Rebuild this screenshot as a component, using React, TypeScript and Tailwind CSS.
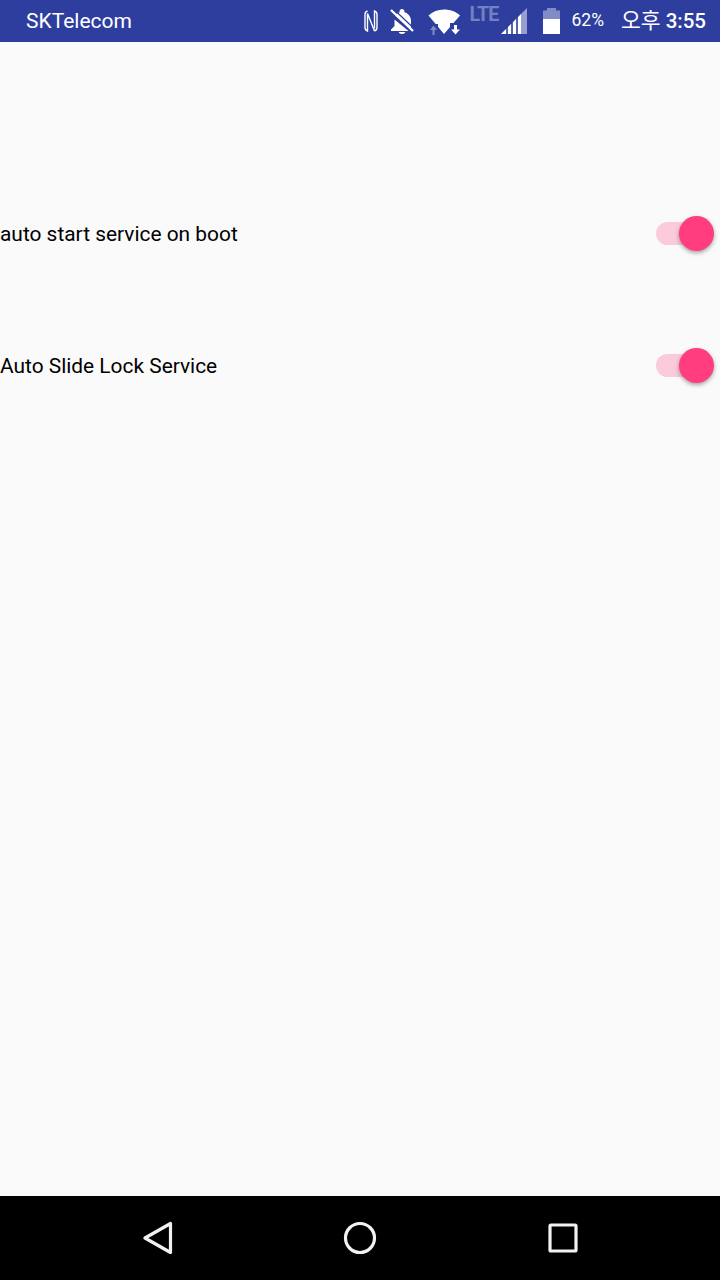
function NfcIcon() {
  return (
    <svg width="14" height="26" viewBox="0 0 14 26" fill="none" stroke="#fff" strokeWidth="1.400" className="shrink-0">
      <path d="M3.500 3C2 3.500 1 4.500 1 6.500v13c0 2 1 3 2.500 3.500V5.500L10.500 23" />
      <path d="M10.500 23c1.500-.5 2.500-1.500 2.500-3.500v-13c0-2-1-3-2.500-3.500v17.500" />
    </svg>
  );
}

function BellOffIcon() {
  return (
    <svg width="24" height="26" viewBox="0 0 24 26" className="shrink-0">
      <path fill="#fff" d="M12 1c-1.400 0-2.400 1-2.400 2.200v1.100C7.600 5 6.200 6.300 5.500 8L21 21v-8c0-4-2.500-7.700-6.600-8.700V3.200C14.400 2 13.400 1 12 1zM4.500 11.500V18L1 21.500V23h17.500z" />
      <path fill="#fff" d="M8.800 24h6.400c0 1.200-1.400 2-3.200 2s-3.200-.8-3.200-2z" />
      <path stroke="#fff" strokeWidth="2.400" d="M1 2l22 21" />
      <path stroke="#2d3e9e" strokeWidth="1.200" d="M3.500 1l20 19" />
    </svg>
  );
}

function WifiIcon() {
  return (
    <svg width="33" height="27" viewBox="0 0 33 27" className="shrink-0">
      <path fill="#fff" d="M16 26L0.500 7.500C4.500 3.500 10 1.500 16 1.500s12 2 16 6z" />
      <path fill="#2d3e9e" d="M0 16h10v11H0zM22 15h11v12H22z" />
      <path fill="#fff" fillOpacity="0.4" d="M4.500 22H2l3.500-4.500L9 22H6.500v5h-2z" />
      <path fill="#fff" d="M26 17h3v4.500h3l-4.500 5-4.500-5h3z" />
    </svg>
  );
}

function SignalIcon() {
  return (
    <svg width="26" height="26" viewBox="0 0 26 26" className="shrink-0">
      <path fill="#fff" fillOpacity="0.2" d="M20 6v20H0z" />
      <path fill="#fff" fillOpacity="0.5" d="M26 0v26h-6V6z" />
      <path fill="#fff" d="M0 26l5-5v5zM7 26v-7l3-3v10zM12 26V14l3-3v15zM17 26V9l3-3v20z" />
    </svg>
  );
}

function BatteryIcon() {
  return (
    <svg width="17" height="26" viewBox="0 0 17 26" className="shrink-0">
      <path fill="#fff" fillOpacity="0.4" d="M4 0h9v2.500h4V11H0V2.500h4z" />
      <path fill="#fff" d="M0 11h17v15H0z" />
    </svg>
  );
}

function StatusBar() {
  return (
    <div className="flex h-[42px] shrink-0 items-center bg-[#2d3e9e] pl-[26px] text-white">
      <span className="text-[21px] leading-none">SKTelecom</span>
      <div className="ml-auto flex items-center pr-[14px]">
        <NfcIcon />
        <div className="ml-[12px]"><BellOffIcon /></div>
        <div className="ml-[14px]"><WifiIcon /></div>
        <span className="mb-[12px] ml-[8px] w-[28px] text-[19.500px] font-bold leading-none tracking-[-0.8px] text-white/35">LTE</span>
        <div className="ml-[4px]"><SignalIcon /></div>
        <div className="ml-[16px]"><BatteryIcon /></div>
        <span className="ml-[11px] text-[17.500px] leading-none">62%</span>
        <span className="ml-[17px] text-[20.500px] leading-none">
          <span className="text-[21.500px]">오후</span> <span className="font-medium">3:55</span>
        </span>
      </div>
    </div>
  );
}

function SettingRow({ label }: { label: string }) {
  return (
    <div className="flex h-[36px] items-center justify-between pr-[6px]">
      <span className="text-[20.900px] leading-none text-black">{label}</span>
      <div className="mb-[2px] flex items-center">
        <div className="h-[23px] w-[51px] rounded-full bg-[#fbcbdb]" />
        <div className="-ml-[28px] h-[35px] w-[35px] rounded-full bg-[#ff3d7f] shadow-[0_2px_4px_rgba(0,0,0,0.35)]" />
      </div>
    </div>
  );
}

function NavBar() {
  return (
    <div className="flex h-[84px] shrink-0 items-center justify-between bg-black pl-[143px] pr-[142px]">
      <svg width="30" height="34" viewBox="0 0 30 34" fill="none" stroke="#f2f2f2" strokeWidth="3.200" strokeLinejoin="round">
        <path d="M27.500 2.500v29L2 17z" />
      </svg>
      <svg width="34" height="34" viewBox="0 0 34 34" fill="none" stroke="#f2f2f2" strokeWidth="3.200" className="-ml-[2px]">
        <circle cx="17" cy="17" r="14.500" />
      </svg>
      <svg width="30" height="30" viewBox="0 0 30 30" fill="none" stroke="#f2f2f2" strokeWidth="3.200" strokeLinejoin="round">
        <rect x="2" y="2" width="26" height="26" rx="1" />
      </svg>
    </div>
  );
}

export default function App() {
  return (
    <div className="flex h-[1280px] w-[720px] flex-col overflow-hidden bg-[#fafafa] font-['Roboto','Noto_Sans_CJK_KR',sans-serif]">
      <StatusBar />
      <main className="flex flex-1 flex-col gap-[96px] pt-[174px]">
        <SettingRow label="auto start service on boot" />
        <SettingRow label="Auto Slide Lock Service" />
      </main>
      <NavBar />
    </div>
  );
}
